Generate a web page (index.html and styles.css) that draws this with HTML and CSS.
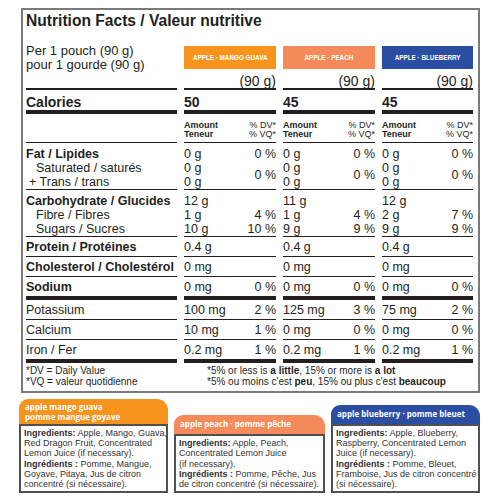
FILE: index.html
```html
<!DOCTYPE html>
<html>

<head>
  <meta charset="utf-8">
  <title>Nutrition Facts / Valeur nutritive</title>
  <link rel="stylesheet" href="styles.css">
</head>

<body>
  <div class="page">
    <div class="label-box">
      <h1 class="title">Nutrition Facts / Valeur nutritive</h1>

      <div class="facts">
        <!-- portion -->
        <div class="cell serving">Per 1 pouch (90 g)<br>pour 1 gourde (90 g)</div>
        <div class="cell serving">
          <div class="badge mango"><span>APPLE · MANGO GUAVA</span></div>
          <div class="size">(90 g)</div>
        </div>
        <div class="cell serving">
          <div class="badge peach"><span>APPLE · PEACH</span></div>
          <div class="size">(90 g)</div>
        </div>
        <div class="cell serving">
          <div class="badge blueberry"><span>APPLE · BLUEBERRY</span></div>
          <div class="size">(90 g)</div>
        </div>

        <!-- calories -->
        <div class="cell calories">Calories</div>
        <div class="cell calories">50</div>
        <div class="cell calories">45</div>
        <div class="cell calories">45</div>

        <!-- en-tete colonnes -->
        <div class="cell heading"></div>
        <div class="cell heading">
          <div class="pair"><span>Amount</span><span class="dv">% DV*</span></div>
          <div class="pair"><span>Teneur</span><span class="dv">% VQ*</span></div>
        </div>
        <div class="cell heading">
          <div class="pair"><span>Amount</span><span class="dv">% DV*</span></div>
          <div class="pair"><span>Teneur</span><span class="dv">% VQ*</span></div>
        </div>
        <div class="cell heading">
          <div class="pair"><span>Amount</span><span class="dv">% DV*</span></div>
          <div class="pair"><span>Teneur</span><span class="dv">% VQ*</span></div>
        </div>

        <!-- lipides -->
        <div class="cell block">
          <div class="main">Fat / Lipides</div>
          <div class="sub">Saturated / saturés</div>
          <div class="sub plus">+ Trans / trans</div>
        </div>
        <div class="cell block">
          <div class="vals">
            <span class="amt">0 g</span><span class="pct">0 %</span>
            <span class="amt">0 g</span><span class="pct span2">0 %</span>
            <span class="amt">0 g</span>
          </div>
        </div>
        <div class="cell block">
          <div class="vals">
            <span class="amt">0 g</span><span class="pct">0 %</span>
            <span class="amt">0 g</span><span class="pct span2">0 %</span>
            <span class="amt">0 g</span>
          </div>
        </div>
        <div class="cell block">
          <div class="vals">
            <span class="amt">0 g</span><span class="pct">0 %</span>
            <span class="amt">0 g</span><span class="pct span2">0 %</span>
            <span class="amt">0 g</span>
          </div>
        </div>

        <!-- glucides -->
        <div class="cell block">
          <div class="main">Carbohydrate / Glucides</div>
          <div class="sub">Fibre / Fibres</div>
          <div class="sub">Sugars / Sucres</div>
        </div>
        <div class="cell block">
          <div class="vals">
            <span class="amt">12 g</span><span class="pct"></span>
            <span class="amt">1 g</span><span class="pct">4 %</span>
            <span class="amt">10 g</span><span class="pct">10 %</span>
          </div>
        </div>
        <div class="cell block">
          <div class="vals">
            <span class="amt">11 g</span><span class="pct"></span>
            <span class="amt">1 g</span><span class="pct">4 %</span>
            <span class="amt">9 g</span><span class="pct">9 %</span>
          </div>
        </div>
        <div class="cell block">
          <div class="vals">
            <span class="amt">12 g</span><span class="pct"></span>
            <span class="amt">2 g</span><span class="pct">7 %</span>
            <span class="amt">9 g</span><span class="pct">9 %</span>
          </div>
        </div>

        <!-- proteines -->
        <div class="cell row"><div class="main">Protein / Protéines</div></div>
        <div class="cell row"><div class="vals"><span class="amt">0.4 g</span></div></div>
        <div class="cell row"><div class="vals"><span class="amt">0.4 g</span></div></div>
        <div class="cell row"><div class="vals"><span class="amt">0.4 g</span></div></div>

        <!-- cholesterol -->
        <div class="cell row"><div class="main">Cholesterol / Cholestérol</div></div>
        <div class="cell row"><div class="vals"><span class="amt">0 mg</span></div></div>
        <div class="cell row"><div class="vals"><span class="amt">0 mg</span></div></div>
        <div class="cell row"><div class="vals"><span class="amt">0 mg</span></div></div>

        <!-- sodium -->
        <div class="cell row thick"><div class="main">Sodium</div></div>
        <div class="cell row thick"><div class="vals"><span class="amt">0 mg</span><span class="pct">0 %</span></div></div>
        <div class="cell row thick"><div class="vals"><span class="amt">0 mg</span><span class="pct">0 %</span></div></div>
        <div class="cell row thick"><div class="vals"><span class="amt">0 mg</span><span class="pct">0 %</span></div></div>

        <!-- mineraux -->
        <div class="cell row">Potassium</div>
        <div class="cell row"><div class="vals"><span class="amt">100 mg</span><span class="pct">2 %</span></div></div>
        <div class="cell row"><div class="vals"><span class="amt">125 mg</span><span class="pct">3 %</span></div></div>
        <div class="cell row"><div class="vals"><span class="amt">75 mg</span><span class="pct">2 %</span></div></div>

        <div class="cell row">Calcium</div>
        <div class="cell row"><div class="vals"><span class="amt">10 mg</span><span class="pct">1 %</span></div></div>
        <div class="cell row"><div class="vals"><span class="amt">0 mg</span><span class="pct">0 %</span></div></div>
        <div class="cell row"><div class="vals"><span class="amt">0 mg</span><span class="pct">0 %</span></div></div>

        <div class="cell row thick">Iron / Fer</div>
        <div class="cell row thick"><div class="vals"><span class="amt">0.2 mg</span><span class="pct">1 %</span></div></div>
        <div class="cell row thick"><div class="vals"><span class="amt">0.2 mg</span><span class="pct">1 %</span></div></div>
        <div class="cell row thick"><div class="vals"><span class="amt">0.2 mg</span><span class="pct">1 %</span></div></div>
      </div>

      <div class="notes">
        <div class="notes-left">
          <p>*DV = Daily Value</p>
          <p>*VQ = valeur quotidienne</p>
        </div>
        <div class="notes-right">
          <p>*5% or less is <b>a little</b>, 15% or more is <b>a lot</b></p>
          <p>*5% ou moins c'est <b>peu</b>, 15% ou plus c'est <b>beaucoup</b></p>
        </div>
      </div>
    </div>

    <!-- ingredients -->
    <div class="cards">
      <div class="card card-mango">
        <div class="card-head">apple mango guava<br>pomme mangue goyave</div>
        <div class="card-body">
          <b>Ingredients:</b> Apple, Mango, Guava,<br>Red Dragon Fruit, Concentrated<br>Lemon Juice (if necessary).<br>
          <b>Ingrédients :</b> Pomme, Mangue,<br>Goyave, Pitaya, Jus de citron<br>concentré (si nécessaire).
        </div>
      </div>
      <div class="card card-peach">
        <div class="card-head">apple peach · pomme pêche</div>
        <div class="card-body">
          <b>Ingredients:</b> Apple, Peach,<br>Concentrated Lemon Juice<br>(if necessary).<br>
          <b>Ingrédients :</b> Pomme, Pêche, Jus<br>de citron concentré (si nécessaire).
        </div>
      </div>
      <div class="card card-blueberry">
        <div class="card-head">apple blueberry · pomme bleuet</div>
        <div class="card-body">
          <b>Ingredients:</b> Apple, Blueberry,<br>Raspberry, Concentrated Lemon<br>Juice (if necessary).<br>
          <b>Ingrédients :</b> Pomme, Bleuet,<br>Framboise, Jus de citron concentré<br>(si nécessaire).
        </div>
      </div>
    </div>
  </div>
</body>

</html>
```

FILE: styles.css
```css
body {
  margin: 0;
  font-family: "Liberation Sans", Arial, sans-serif;
  color: #231f20;
  background-color: #fff;
}

.page {
  padding: 8px 0 0 21px;
  width: 459px;
}

.label-box {
  border: 2px solid #7a7a7a;
  padding: 0 5px 0 3px;
}

.title {
  margin: 0 0 12px;
  font-size: 15.6px;
  line-height: 22px;
  font-weight: bold;
}

/* tableau */
.facts {
  display: grid;
  grid-template-columns: 151px 92px 92px 91px;
  column-gap: 7px;
}

.cell {
  border-bottom: 1px solid #231f20;
  font-size: 12.5px;
  line-height: 14px;
}

.serving {
  border-bottom-width: 2px;
  font-size: 13px;
  line-height: 14px;
}

.badge {
  height: 23px;
  margin-top: 2px;
  display: flex;
  align-items: center;
  justify-content: center;
  color: #fff;
  font-size: 8px;
  font-weight: bold;
  white-space: nowrap;
}

.badge span {
  display: inline-block;
  transform: scaleX(0.79);
}

.badge.mango {
  background-color: #f7941d;
}

.badge.peach {
  background-color: #f58a5a;
}

.badge.blueberry {
  background-color: #2b4ea2;
}

.size {
  margin-top: 6px;
  text-align: right;
  font-size: 14px;
  line-height: 13px;
}

.calories {
  border-bottom-width: 4px;
  padding-top: 4px;
  font-size: 14px;
  line-height: 16px;
  font-weight: bold;
}

.heading {
  padding: 7px 0 3px;
  font-size: 9px;
  line-height: 9px;
}

.pair {
  display: flex;
  justify-content: space-between;
}

.pair span:first-child {
  font-weight: bold;
}

.block {
  padding-top: 4px;
}

.row {
  padding: 3px 0 2px;
}

.thick {
  border-bottom-width: 4px;
}

.main {
  font-weight: bold;
}

.sub {
  padding-left: 10px;
}

.sub.plus {
  padding-left: 3px;
}

.vals {
  display: grid;
  grid-template-columns: 1fr auto;
  grid-auto-rows: 14px;
}

.amt {
  grid-column: 1;
}

.pct {
  grid-column: 2;
  text-align: right;
}

.pct.span2 {
  grid-row: span 2;
  align-self: center;
}

/* notes */
.notes {
  display: flex;
  padding: 2px 0 4px;
  font-size: 10px;
  line-height: 11px;
}

.notes p {
  margin: 0;
}

.notes-left {
  width: 181px;
}

/* ingredients */
.cards {
  display: flex;
  align-items: flex-end;
  gap: 6px;
  margin: 6px 0 0 -2px;
}

.card {
  width: 149px;
}

.card-peach {
  width: 151px;
}

.card-head {
  padding: 4px 6px 5px;
  border-radius: 9px 11px 0 0;
  color: #fff;
  font-family: "Open Sans", "Liberation Sans", sans-serif;
  font-size: 8px;
  line-height: 10px;
  font-weight: bold;
  white-space: nowrap;
}

.card-mango .card-head {
  padding: 3px 6px 2px;
  background-color: #f7941d;
}

.card-peach .card-head {
  background-color: #f58a5a;
}

.card-blueberry .card-head {
  background-color: #2b4ea2;
}

.card-body {
  border: 2px solid #505050;
  padding: 2px 3px;
  font-size: 9px;
  line-height: 10.2px;
  color: #333;
  white-space: nowrap;
}
```
